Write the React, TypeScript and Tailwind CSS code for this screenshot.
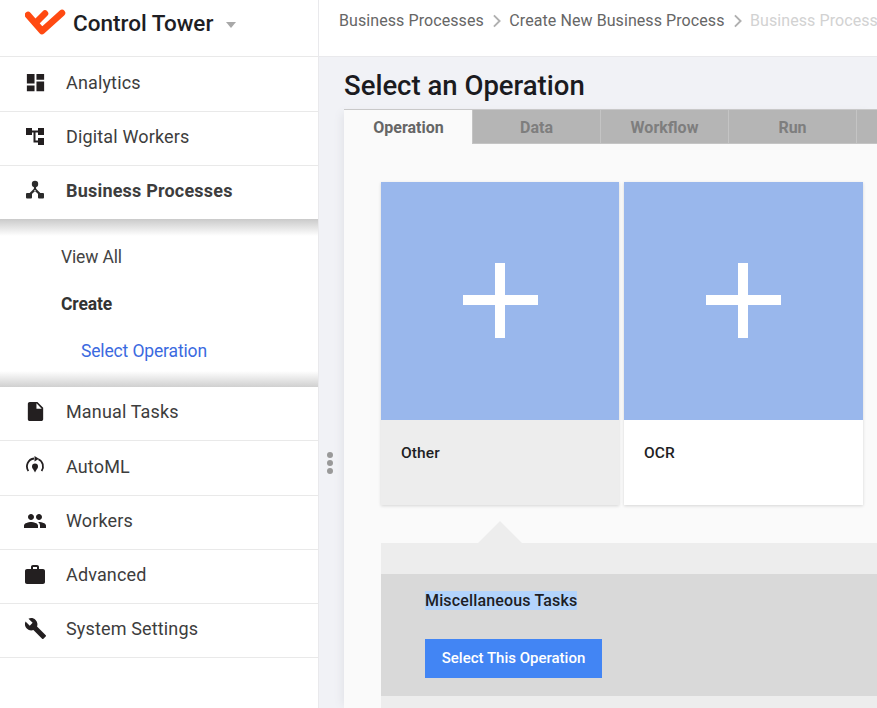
import React from "react";
import { MdDashboard, MdInsertDriveFile, MdPeople, MdWork, MdBuild } from "react-icons/md";

const TreeIcon = () => (
  <svg width="20" height="20" viewBox="0 0 20 20" fill="#231f20">
    <rect x="1" y="1" width="6" height="7" />
    <rect x="13" y="1" width="6" height="7" />
    <rect x="13" y="11" width="6" height="7" />
    <path d="M7 3.5h6v2h-2.5v8H13v2H8.5v-10H7z" />
  </svg>
);

const NetworkIcon = () => (
  <svg width="20" height="20" viewBox="0 0 20 20" fill="#2b2b2b">
    <circle cx="10" cy="4" r="3.2" />
    <rect x="8.9" y="5" width="2.2" height="5" />
    <path d="M9.2 8.6l1.7 1.6-4.8 4.6-1.7-1.6zM10.8 8.6l-1.7 1.6 4.8 4.6 1.7-1.6z" />
    <rect x="1" y="13" width="6" height="5.5" rx="1" />
    <rect x="13" y="13" width="6" height="5.5" rx="1" />
  </svg>
);

const AutoMlIcon = () => (
  <svg width="20" height="20" viewBox="0 0 20 20" fill="none" stroke="#231f20" strokeWidth="1.8">
    <path d="M3.4 15a8 8 0 0 1 5.6-12.5" />
    <path d="M16.6 15a8 8 0 0 0-3.2-11.8" />
    <path d="M9.5 0l4.5 2.8-4.5 2.8z" fill="#231f20" stroke="none" />
    <circle cx="10" cy="10.5" r="3" fill="#231f20" stroke="none" />
    <path d="M7.8 12.5h4.4l-2.2 4z" fill="#231f20" stroke="none" />
  </svg>
);

const Logo = () => (
  <svg width="42" height="28" viewBox="0 0 42 28" fill="none" stroke="#ff4a12" strokeWidth="6.5" strokeLinecap="round" strokeLinejoin="round">
    <path d="M3 6l14 16L37 4" />
    <path d="M10.5 14L20 4.5" />
  </svg>
);

const items = [
  { label: "Manual Tasks", icon: <MdInsertDriveFile size={23} color="#231f20" />, h: "h-[54px]" },
  { label: "AutoML", icon: <AutoMlIcon />, h: "h-[55px]" },
  { label: "Workers", icon: <MdPeople size={24} color="#231f20" />, h: "h-[54px]" },
  { label: "Advanced", icon: <MdWork size={24} color="#231f20" />, h: "h-[54px]" },
  { label: "System Settings", icon: <MdBuild size={23} color="#231f20" />, h: "h-[54px]" },
];

const NavRow = ({ icon, label, h, bold }: { icon: React.ReactNode; label: string; h: string; bold?: boolean }) => (
  <div className={`flex items-center ${h} border-b border-[#e9e9e9] pb-[4px] pl-[23px] text-[18px] tracking-[0.15px] text-[#3d3d3d] ${bold ? "font-bold" : ""}`}>
    <span className="flex w-6 justify-center">{icon}</span>
    <span className="ml-[19px]">{label}</span>
  </div>
);

const tabs = ["Data", "Workflow", "Run"];

export default function App() {
  return (
    <div className="flex h-[708px] w-[877px] overflow-hidden bg-[#f1f2f6] font-['Roboto',sans-serif]">
      <aside className="w-[319px] shrink-0 border-r border-[#e9e9ec] bg-white">
        <div className="flex h-[57px] items-center border-b border-[#e9e9e9] pb-[8px] pl-[25px]">
          <span className="-mt-[3px]"><Logo /></span>
          <span className="ml-[6px] text-[22.5px] font-medium text-[#1e1e24]">Control Tower</span>
          <span className="ml-[13px] mt-[2px] h-0 w-0 border-x-[5px] border-t-[6px] border-x-transparent border-t-[#a8a8a8]" />
        </div>
        <NavRow icon={<MdDashboard size={23} color="#231f20" />} label="Analytics" h="h-[55px]" />
        <NavRow icon={<TreeIcon />} label="Digital Workers" h="h-[54px]" />
        <div className="flex h-[53px] items-center pb-[5px] pl-[23px] text-[18px] font-bold tracking-[0.2px] text-[#3d3d3d]">
          <span className="flex w-6 justify-center"><NetworkIcon /></span>
          <span className="ml-[19px]">Business Processes</span>
        </div>
        <div className="flex h-[168px] flex-col bg-[linear-gradient(to_bottom,#cacaca_0px,#fff_17px,#fff_152px,#d0d0d0_168px)] pl-[61px] pt-[15px] text-[17.5px] tracking-[-0.15px] text-[#444]">
          <div className="h-[47px] leading-[47px]">View All</div>
          <div className="h-[47px] font-bold leading-[47px] text-[#333]">Create</div>
          <div className="h-[47px] pl-5 leading-[47px] text-[#3b6ae0]">Select Operation</div>
        </div>
        {items.map((item) => (
          <NavRow key={item.label} icon={item.icon} label={item.label} h={item.h} />
        ))}
      </aside>

      <main className="min-w-0 flex-1">
        <div className="flex h-[57px] items-center gap-[8px] whitespace-nowrap border-b border-[#e9e9ec] bg-white pb-[14px] pl-5 text-[16px] tracking-[0.08px] text-[#666]">
          <span>Business Processes</span>
          <Chevron />
          <span>Create New Business Process</span>
          <Chevron />
          <span className="text-[#d2d2d2]">Business Process</span>
        </div>

        <div className="flex">
          <div className="flex w-[25px] shrink-0 flex-col items-center gap-[2px] pr-[3px] pt-[395px]">
            <span className="h-[6px] w-[6px] rounded-full bg-[#999]" />
            <span className="h-[6px] w-[6px] rounded-full bg-[#999]" />
            <span className="h-[6px] w-[6px] rounded-full bg-[#999]" />
          </div>

          <div className="w-[533px]">
            <h1 className="h-[52px] pt-[11px] text-[27.5px] font-medium leading-[36px] text-[#1b1b1f]">Select an Operation</h1>
            <div className="h-[600px] bg-[#fafafa] shadow-[-6px_0_8px_-4px_#e2e3e8]">
              <div className="flex h-[35px] border-t border-[#c9c9c9] pl-[1px] text-[16px] font-bold">
                <div className="flex w-[127px] items-center justify-center bg-[#fafafa] pt-[2px] text-[#666]">Operation</div>
                {tabs.map((t) => (
                  <div key={t} className="flex w-[128px] items-center justify-center border-l border-[#c4c4c4] border-b border-b-[#c4c4c4] bg-[#b5b5b5] pt-[2px] text-[#7e7e7e]">{t}</div>
                ))}
                <div className="flex-1 border-l border-b border-[#c4c4c4] bg-[#b5b5b5]" />
              </div>

              <div className="flex gap-[5px] pl-[37px] pt-[38px]">
                <OperationCard label="Other" width="w-[238px]" active />
                <OperationCard label="OCR" width="w-[239px]" />
              </div>

              <div className="relative mt-[38px] ml-[37px] bg-[#ededed] pt-[31px]">
                <div className="absolute -top-[22px] left-[97px] h-0 w-0 border-x-[22px] border-b-[22px] border-x-transparent border-b-[#ededed]" />
                <div className="h-[122px] bg-[#d9d9d9] pl-[44px] pt-[17px]">
                  <div className="text-[16px] font-medium leading-[19px] tracking-[0.15px] text-[#1e1e24]">
                    <span className="bg-[#b3d4fc]">Miscellaneous Tasks</span>
                  </div>
                  <button className="mt-[29px] h-[39px] w-[177px] bg-[#4285f4] text-[15px] font-medium text-white">Select This Operation</button>
                </div>
                <div className="h-[20px]" />
              </div>
            </div>
          </div>
        </div>
      </main>
    </div>
  );
}

function Chevron() {
  return (
    <svg className="shrink-0" width="9.5" height="14" viewBox="0 0 10 14" fill="none" stroke="#b0b0b0" strokeWidth="2">
      <path d="M2 1l6 6-6 6" />
    </svg>
  );
}

function OperationCard({ label, width, active }: { label: string; width: string; active?: boolean }) {
  return (
    <div className={`${width} shadow-[0_1px_3px_rgba(0,0,0,0.15)] ${active ? "bg-[#ededed]" : "bg-white"}`}>
      <div className="flex h-[238px] items-center justify-center bg-[#99b7ec] pb-[2px]">
        <svg width="75" height="75" viewBox="0 0 75 75" fill="#fff">
          <rect x="32" y="0" width="10" height="75" />
          <rect x="0" y="32" width="75" height="10" />
        </svg>
      </div>
      <div className="h-[85px] pl-5 pt-[24px] text-[15.5px] font-medium leading-[18px] tracking-[0.1px] text-[#1e1e24]">{label}</div>
    </div>
  );
}
